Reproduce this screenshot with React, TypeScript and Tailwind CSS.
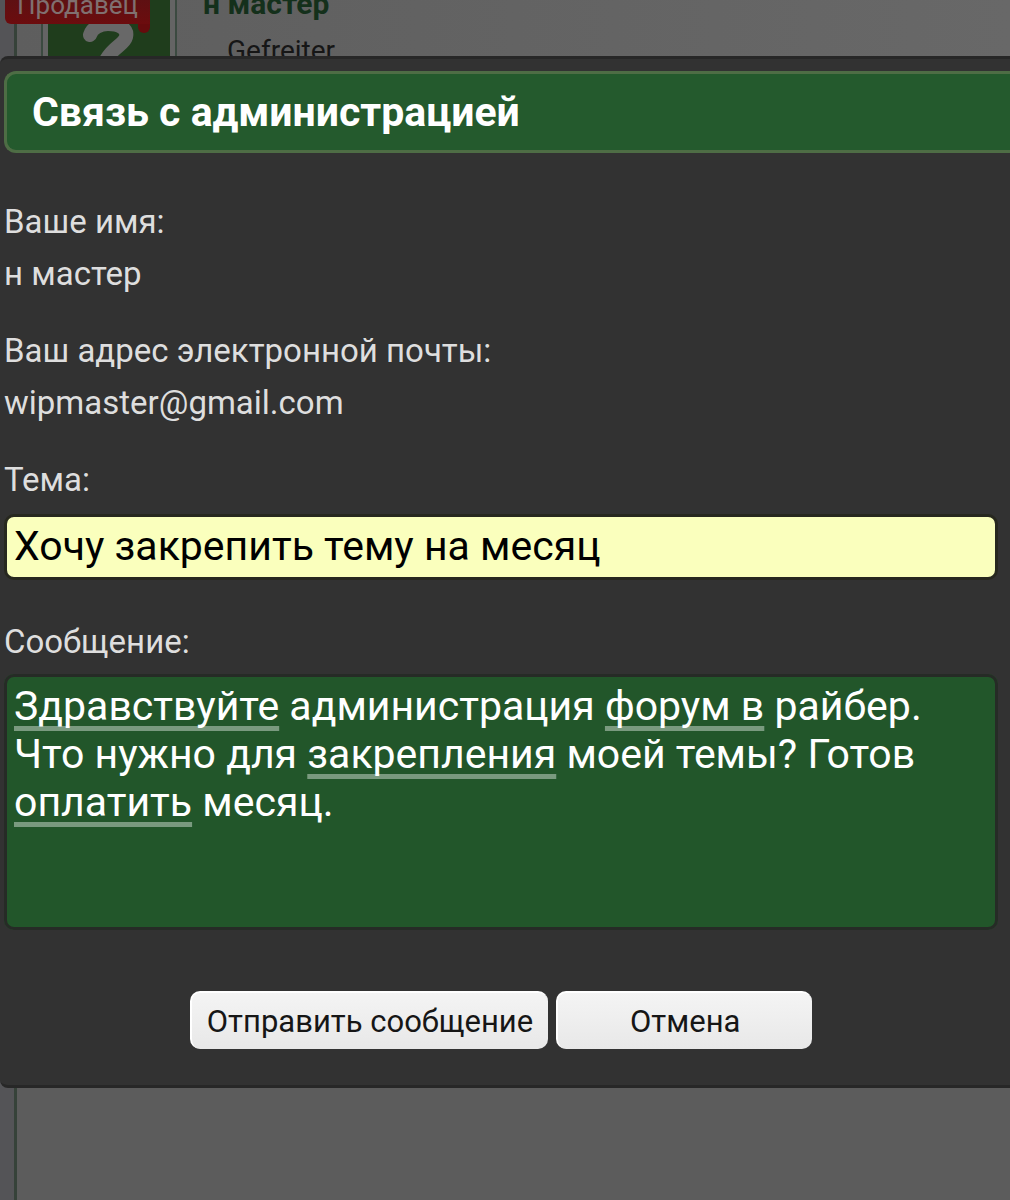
import React, { useState } from "react";

const MESSAGE =
  "Здравствуйте администрация форум в райбер. Что нужно для закрепления моей темы? Готов оплатить месяц.";

// Words that the keyboard underlines while typing
const MARKED = /(Здравствуйте|форум в|закрепления|оплатить)/;

const PostBehind: React.FC = () => {
  return (
    <div className="min-h-screen overflow-hidden bg-[#545457] pl-[14px]">
      <div className="min-h-screen border-l-[3px] border-[#364239] bg-[#5c5c5c]">
        <div className="flex h-14 overflow-hidden bg-gradient-to-r from-[#5e5e5e] to-[#686868] pl-6">
          <div className="h-full w-[136px] border-x-2 border-[#3b4a40] bg-[#646464] px-[5px]">
            <svg
              viewBox="0 0 122 56"
              preserveAspectRatio="none"
              className="h-full w-full bg-[#1f3d1c]"
              aria-hidden="true"
            >
              <path
                d="M42 35 C44 28 52 24 60 24 C72 24 80 29 78 37 C76 45 64 47 57 62"
                fill="none"
                stroke="#686868"
                strokeWidth="14"
                strokeLinecap="round"
              />
            </svg>
          </div>
          <div className="-mt-[14px] pl-[26px]">
            <p className="text-[30px] leading-9 font-bold text-[#14301b]">
              н мастер
            </p>
            <p className="pl-6 text-[28px] leading-[58px] text-[#161616]">
              Gefreiter
            </p>
          </div>
        </div>
      </div>

      {/* Seller ribbon with its folded corner */}
      <div className="absolute top-0 left-[5px]">
        <div className="absolute top-0 right-0 h-[33px] w-3 rounded-b-md bg-[#660b0d]" />
        <div className="relative flex h-6 items-end rounded-bl-md bg-gradient-to-b from-[#5e1012] to-[#6c0c0e] px-3 text-[26px] leading-[38px] text-[#807070]">
          Продавец
        </div>
      </div>
    </div>
  );
};

interface InfoProps {
  label: string;
  value: string;
}

const Info: React.FC<InfoProps> = ({ label, value }) => (
  <dl className="mb-[25px]">
    <dt>{label}</dt>
    <dd>{value}</dd>
  </dl>
);

const App: React.FC = () => {
  const [subject, setSubject] = useState("Хочу закрепить тему на месяц");
  const [message, setMessage] = useState(MESSAGE);

  const button =
    "h-[58px] rounded-[10px] border-t-2 border-l-2 border-white bg-gradient-to-b from-[#f4f4f4] to-[#e8e8e8] pt-px text-[31px] text-[#161616]";

  return (
    <div className="relative min-h-screen overflow-hidden font-['Roboto',sans-serif]">
      <PostBehind />

      <div className="absolute inset-x-0 top-14">
        <form
          className="rounded-l-lg border-y-[3px] border-[#272727] bg-[#323232] pt-3 pb-9 pl-1 text-[33px] leading-[52px] text-[#dedede]"
          onSubmit={(e) => e.preventDefault()}
        >
          <h1 className="mb-[43px] rounded-l-xl border-[3px] border-r-0 border-[#4e6d45] bg-[#245a2d] px-[25px] py-[14px] text-[41px] leading-[48px] font-bold text-white">
            Связь с администрацией
          </h1>

          <Info label="Ваше имя:" value="н мастер" />
          <Info
            label="Ваш адрес электронной почты:"
            value="wipmaster@gmail.com"
          />

          <div className="mr-3">
            <label htmlFor="subject" className="block">
              Тема:
            </label>
            <input
              id="subject"
              type="text"
              value={subject}
              onChange={(e) => setSubject(e.target.value)}
              className="mt-2 mb-9 block h-[66px] w-full rounded-[10px] border-[3px] border-[#27281f] bg-[#faffbd] px-[7px] pb-[2px] text-[41px] leading-[48px] text-black outline-none"
            />

            <label htmlFor="message" className="block">
              Сообщение:
            </label>
            <div className="relative mt-[6px] rounded-[10px] bg-[#22562a] text-[41px] leading-[48px]">
              {/* Underlines only, the letters come from the textarea */}
              <div
                aria-hidden="true"
                className="absolute inset-0 border-[3px] border-transparent px-[7px] py-[5px] whitespace-pre-wrap text-transparent select-none"
              >
                {message.split(MARKED).map((part, i) =>
                  i % 2 === 1 ? (
                    <span
                      key={i}
                      className="underline decoration-[#7a9a7f] decoration-[5px] underline-offset-[6px] [text-decoration-skip-ink:none]"
                    >
                      {part}
                    </span>
                  ) : (
                    part
                  ),
                )}
              </div>
              <textarea
                id="message"
                value={message}
                spellCheck={false}
                onChange={(e) => setMessage(e.target.value)}
                className="relative block h-64 w-full resize-none rounded-[10px] border-[3px] border-[#262b26] bg-transparent px-[7px] py-[5px] text-white outline-none"
              />
            </div>
          </div>

          <div className="mt-[61px] flex justify-center gap-2 pr-3">
            <button type="submit" className={`${button} px-[15px]`}>
              Отправить сообщение
            </button>
            <button type="button" className={`${button} w-64`}>
              Отмена
            </button>
          </div>
        </form>
      </div>
    </div>
  );
};

export default App;
